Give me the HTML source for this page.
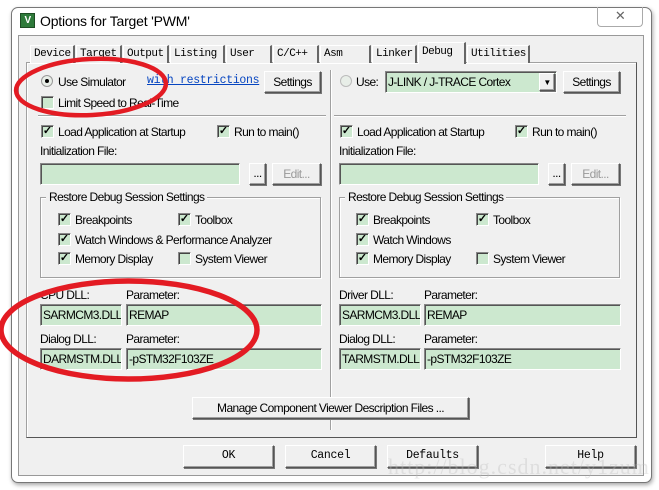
<!DOCTYPE html>
<html><head><meta charset="utf-8"><style>
*{box-sizing:border-box;margin:0;padding:0}
body{width:659px;height:490px;background:#fff;position:relative;overflow:hidden;font-family:"Liberation Sans",sans-serif;font-size:12px;color:#000;letter-spacing:-0.6px}
.a{position:absolute;white-space:nowrap}
.frame{left:11px;top:7px;width:641px;height:476px;background:#fff;border:1px solid #777;border-radius:7px;box-shadow:1px 2px 4px rgba(0,0,0,.35)}
.client{left:18px;top:35px;width:626px;height:441px;background:#f0f0f0;border:1px solid #999}
.panel{left:26px;top:62px;width:611px;height:376px;border:1px solid #a0a0a0;border-right-color:#555;border-bottom-color:#555;box-shadow:inset 1px 1px 0 #fff}
.tab{top:45px;height:18px;border:1px solid #fff;border-right:2px solid #666;border-bottom:none;font-family:"Liberation Mono",monospace;font-size:11px;letter-spacing:-0.5px;padding:2px 0 0 3px;background:#f0f0f0}
.btn{background:#f0f0f0;border:1px solid #fff;border-right-color:#555;border-bottom-color:#555;box-shadow:1px 1px 0 #777 ,inset -1px -1px 0 #a0a0a0;text-align:center;line-height:20px}
.fld{background:#cce8cf;border:1px solid #888;border-right-color:#fff;border-bottom-color:#fff;box-shadow:inset 1px 1px 0 #555;padding-left:2px;line-height:20px;overflow:hidden}
.cb{width:13px;height:13px;background:#cce8cf;border:1px solid #888;border-right-color:#fff;border-bottom-color:#fff;box-shadow:inset 1px 1px 0 #444;font-size:11px;line-height:11px;text-align:center;font-weight:bold;letter-spacing:0}
.grp{border:1px solid #a0a0a0;box-shadow:1px 1px 0 #fff, inset 1px 1px 0 #fff}
.gl{background:#f0f0f0;padding:0 3px}
.sep{height:2px;border-top:1px solid #a0a0a0;border-bottom:1px solid #fff}
.mono{font-family:"Liberation Mono",monospace;font-size:11.5px;letter-spacing:-0.3px}
</style></head><body>
<div class="a frame"></div>
<div class="a" style="left:20px;top:13px;width:15px;height:15px;background:#2e7a3a;border:1px solid #1d4d23;color:#fff;font-size:10px;font-weight:bold;line-height:13px;text-align:center">V</div>
<div class="a" style="left:40px;top:13px;font-size:14px;letter-spacing:-0.2px">Options for Target 'PWM'</div>
<div class="a" style="left:597px;top:7px;width:46px;height:20px;border:1px solid #aaa;border-top:none;border-radius:0 0 4px 4px;text-align:center;color:#666;font-size:13px;line-height:18px">✕</div>
<div class="a client"></div>
<div class="a panel"></div>
<div class="a tab" style="left:30px;width:45px">Device</div>
<div class="a tab" style="left:76px;width:46px">Target</div>
<div class="a tab" style="left:123px;width:46px">Output</div>
<div class="a tab" style="left:170px;width:55px">Listing</div>
<div class="a tab" style="left:226px;width:46px">User</div>
<div class="a tab" style="left:273px;width:46px">C/C++</div>
<div class="a tab" style="left:320px;width:51px">Asm</div>
<div class="a tab" style="left:372px;width:45px">Linker</div>
<div class="a tab" style="left:418px;top:42px;height:22px;width:48px;border-bottom:none;z-index:2;padding-top:3px">Debug</div>
<div class="a tab" style="left:467px;width:63px">Utilities</div>
<div class="a" style="left:330px;top:70px;width:2px;height:360px;border-left:1px solid #a0a0a0;border-right:1px solid #fff"></div>

<!-- left -->
<div class="a" style="left:41px;top:75px;width:12px;height:12px;border-radius:50%;background:#e8eee8;border:1px solid #999"><div style="margin:3px;width:4px;height:4px;border-radius:50%;background:#000"></div></div>
<div class="a" style="left:58px;top:75px">Use Simulator</div>
<div class="a mono" style="left:147px;top:74px;color:#0645c0;text-decoration:underline">with restrictions</div>
<div class="a btn" style="left:264px;top:71px;width:57px;height:22px">Settings</div>
<div class="a cb" style="left:41px;top:96px"></div>
<div class="a" style="left:58px;top:96px">Limit Speed to Real-Time</div>
<div class="a sep" style="left:38px;top:115px;width:288px"></div>
<div class="a cb" style="left:41px;top:125px">✓</div>
<div class="a" style="left:58px;top:125px">Load Application at Startup</div>
<div class="a cb" style="left:217px;top:125px">✓</div>
<div class="a" style="left:234px;top:125px">Run to main()</div>
<div class="a" style="left:40px;top:144px">Initialization File:</div>
<div class="a fld" style="left:40px;top:163px;width:200px;height:22px"></div>
<div class="a btn" style="left:249px;top:163px;width:17px;height:22px;line-height:18px">...</div>
<div class="a btn" style="left:272px;top:163px;width:49px;height:22px;color:#999">Edit...</div>
<div class="a grp" style="left:40px;top:197px;width:281px;height:81px"></div>
<div class="a gl" style="left:46px;top:190px">Restore Debug Session Settings</div>
<div class="a cb" style="left:58px;top:213px">✓</div><div class="a" style="left:75px;top:213px">Breakpoints</div>
<div class="a cb" style="left:178px;top:213px">✓</div><div class="a" style="left:195px;top:213px">Toolbox</div>
<div class="a cb" style="left:58px;top:233px">✓</div><div class="a" style="left:75px;top:233px">Watch Windows &amp; Performance Analyzer</div>
<div class="a cb" style="left:58px;top:252px">✓</div><div class="a" style="left:75px;top:252px">Memory Display</div>
<div class="a cb" style="left:178px;top:252px"></div><div class="a" style="left:195px;top:252px">System Viewer</div>
<div class="a" style="left:40px;top:288px">CPU DLL:</div>
<div class="a" style="left:126px;top:288px">Parameter:</div>
<div class="a fld" style="left:40px;top:304px;width:82px;height:22px">SARMCM3.DLL</div>
<div class="a fld" style="left:126px;top:304px;width:196px;height:22px">REMAP</div>
<div class="a" style="left:40px;top:332px">Dialog DLL:</div>
<div class="a" style="left:126px;top:332px">Parameter:</div>
<div class="a fld" style="left:40px;top:348px;width:82px;height:22px">DARMSTM.DLL</div>
<div class="a fld" style="left:126px;top:348px;width:196px;height:22px">-pSTM32F103ZE</div>

<!-- right -->
<div class="a" style="left:340px;top:75px;width:12px;height:12px;border-radius:50%;background:#e8eee8;border:1px solid #bbb"></div>
<div class="a" style="left:356px;top:75px">Use:</div>
<div class="a fld" style="left:385px;top:71px;width:172px;height:22px">J-LINK / J-TRACE Cortex</div>
<div class="a btn" style="left:539px;top:73px;width:16px;height:18px;font-size:8px;line-height:18px">▼</div>
<div class="a btn" style="left:563px;top:71px;width:57px;height:22px">Settings</div>
<div class="a sep" style="left:334px;top:115px;width:292px"></div>
<div class="a cb" style="left:340px;top:125px">✓</div>
<div class="a" style="left:357px;top:125px">Load Application at Startup</div>
<div class="a cb" style="left:515px;top:125px">✓</div>
<div class="a" style="left:532px;top:125px">Run to main()</div>
<div class="a" style="left:339px;top:144px">Initialization File:</div>
<div class="a fld" style="left:339px;top:163px;width:200px;height:22px"></div>
<div class="a btn" style="left:548px;top:163px;width:17px;height:22px;line-height:18px">...</div>
<div class="a btn" style="left:571px;top:163px;width:49px;height:22px;color:#999">Edit...</div>
<div class="a grp" style="left:339px;top:197px;width:281px;height:81px"></div>
<div class="a gl" style="left:345px;top:190px">Restore Debug Session Settings</div>
<div class="a cb" style="left:356px;top:213px">✓</div><div class="a" style="left:373px;top:213px">Breakpoints</div>
<div class="a cb" style="left:476px;top:213px">✓</div><div class="a" style="left:493px;top:213px">Toolbox</div>
<div class="a cb" style="left:356px;top:233px">✓</div><div class="a" style="left:373px;top:233px">Watch Windows</div>
<div class="a cb" style="left:356px;top:252px">✓</div><div class="a" style="left:373px;top:252px">Memory Display</div>
<div class="a cb" style="left:476px;top:252px"></div><div class="a" style="left:493px;top:252px">System Viewer</div>
<div class="a" style="left:339px;top:288px">Driver DLL:</div>
<div class="a" style="left:424px;top:288px">Parameter:</div>
<div class="a fld" style="left:339px;top:304px;width:82px;height:22px">SARMCM3.DLL</div>
<div class="a fld" style="left:424px;top:304px;width:197px;height:22px">REMAP</div>
<div class="a" style="left:339px;top:332px">Dialog DLL:</div>
<div class="a" style="left:424px;top:332px">Parameter:</div>
<div class="a fld" style="left:339px;top:348px;width:82px;height:22px">TARMSTM.DLL</div>
<div class="a fld" style="left:424px;top:348px;width:197px;height:22px">-pSTM32F103ZE</div>

<div class="a btn" style="left:192px;top:397px;width:277px;height:22px">Manage Component Viewer Description Files ...</div>
<div class="a btn mono" style="left:183px;top:445px;width:91px;height:23px">OK</div>
<div class="a btn mono" style="left:285px;top:445px;width:91px;height:23px">Cancel</div>
<div class="a btn mono" style="left:387px;top:445px;width:91px;height:23px">Defaults</div>
<div class="a btn mono" style="left:545px;top:445px;width:91px;height:23px">Help</div>
<div class="a" style="left:388px;top:454px;font-family:'Liberation Serif',serif;font-size:22px;color:rgba(190,190,190,.35);letter-spacing:1px">http://blog.csdn.net/y1zum</div>

<svg class="a" style="left:0;top:0" width="659" height="490">
<ellipse cx="91" cy="87" rx="75" ry="28" fill="none" stroke="#e31b23" stroke-width="4.5" transform="rotate(-3 91 87)"/>
<ellipse cx="129" cy="330" rx="128" ry="49" fill="none" stroke="#e31b23" stroke-width="5.5"/>
</svg>
</body></html>
